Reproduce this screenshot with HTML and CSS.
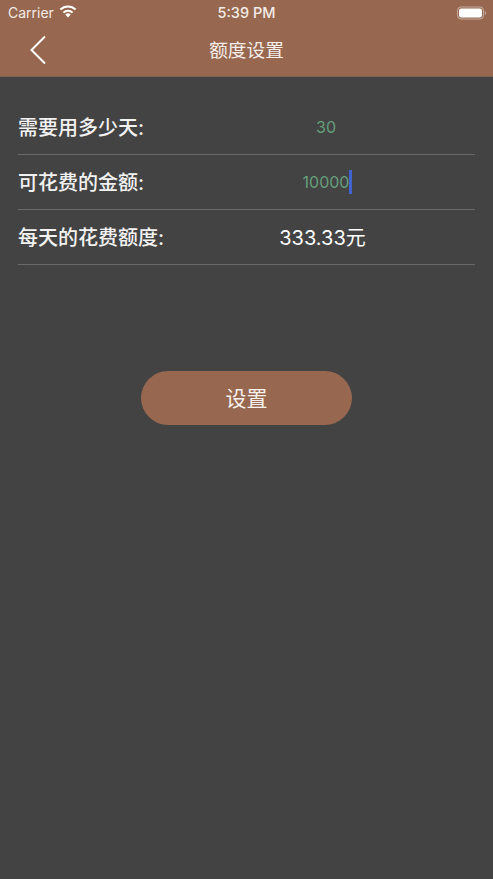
FILE: index.html
```html
<!DOCTYPE html>
<html lang="zh">
<head>
<meta charset="utf-8">
<title>额度设置</title>
<link rel="stylesheet" href="styles.css">
</head>
<body>
<header class="top">
  <div class="status">
    <div class="status-left">
      <span>Carrier</span>
      <svg class="wifi" viewBox="0 0 18 13" width="18" height="13"><path d="M9 12.600 6.300 9.600a3.900 3.900 0 0 1 5.400 0Z" fill="#fff"/><path d="M4.400 7.600a6.600 6.600 0 0 1 9.200 0" fill="none" stroke="#fff" stroke-width="2"/><path d="M1.400 4.500a10.900 10.900 0 0 1 15.200 0" fill="none" stroke="#fff" stroke-width="2"/></svg>
    </div>
    <span class="time">5:39 PM</span>
    <svg class="battery" viewBox="0 0 30 14" width="30" height="14"><rect x=".5" y="1" width="26" height="12" rx="3.500" fill="none" stroke="#fff" stroke-opacity=".45"/><rect x="2" y="2.500" width="23" height="9" rx="2.200" fill="#fff"/><path d="M27.800 5v4c.8-.3 1.300-1.100 1.300-2s-.5-1.700-1.300-2Z" fill="#fff" fill-opacity=".45"/></svg>
  </div>
  <nav class="nav">
    <svg class="back" viewBox="0 0 18 30" width="18" height="30"><path d="M16 1.500 2.500 15 16 28.500" fill="none" stroke="#fff" stroke-width="2"/></svg>
    <h1>额度设置</h1>
  </nav>
</header>
<main class="form">
  <div class="row"><span class="label">需要用多少天:</span><span class="value green">30</span></div>
  <div class="row"><span class="label">可花费的金额:</span><span class="value green"><span class="caret-wrap">10000<i class="caret"></i></span></span></div>
  <div class="row"><span class="label">每天的花费额度:</span><span class="value white">333.33元</span></div>
</main>
<div class="action"><button class="btn">设置</button></div>
</body>
</html>
```
FILE: styles.css
```css
* { box-sizing: border-box; }
html, body { margin: 0; height: 100%; }
body {
  background: #434343;
  font-family: "Inter", "Noto Sans CJK SC", sans-serif;
  color: #fff;
  overflow: hidden;
}
.top {
  height: 77px;
  background: #97684f;
  border-bottom: 1px solid #7d6253;
}
.status {
  height: 26px;
  padding: 0 6px 2px 8px;
  display: flex;
  align-items: center;
  justify-content: space-between;
  position: relative;
  font-size: 14px;
  color: #f3ebe6;
}
.status-left { display: flex; align-items: center; gap: 5px; }
.wifi { margin-top: -2px; }
.battery { margin-top: 2px; }
.time {
  position: absolute;
  left: 0; right: 0;
  text-align: center;
  font-size: 14.500px;
  font-weight: 500;
}
.nav {
  height: 50px;
  position: relative;
  display: flex;
  align-items: center;
  justify-content: center;
  padding-bottom: 5px;
}
.back { position: absolute; left: 29px; top: 9px; }
.nav h1 { margin: 0; font-size: 18.700px; font-weight: 400; color: #f5eeea; }
.form { padding: 23px 18px 0; }
.row {
  height: 55px;
  border-bottom: 1px solid #6a6a6a;
  display: flex;
  align-items: center;
  padding-bottom: 2px;
}
.label { width: 159px; font-size: 20px; font-weight: 500; color: #f2f2f2; }
.value { flex: 1; text-align: center; }
.green { color: #659f7c; font-size: 16px; padding-top: 2px; }
.white { color: #fff; font-size: 20px; padding-right: 7px; }
.caret-wrap { position: relative; display: inline-block; }
.caret {
  position: absolute;
  right: -3px; top: -2px;
  width: 3px; height: 24px;
  background: #3f63d0;
}
.action {
  margin-top: 106px;
  display: flex;
  justify-content: center;
}
.btn {
  width: 211px;
  height: 54px;
  border: 0;
  border-radius: 27px;
  background: #97684f;
  color: #f7f1ed;
  font: inherit;
  font-size: 21px;
  padding-bottom: 3px;
}
```
